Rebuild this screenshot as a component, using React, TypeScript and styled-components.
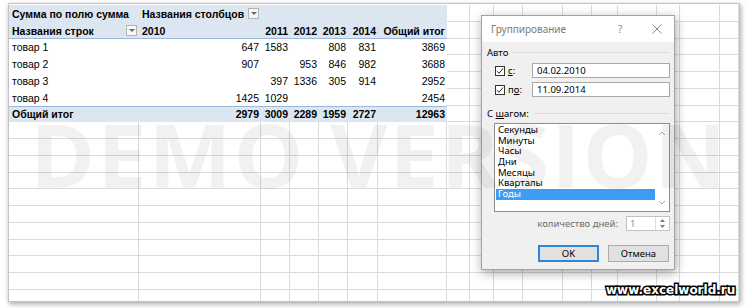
import React from "react";
import styled, { createGlobalStyle } from "styled-components";

const PIVOT_COLS = [130, 122, 29, 29, 29, 30, 69];
const REST_COLS = [23, 24, 29, 40, 29, 26, 39, 23, 40];
const ROW_H = 16.75;
const SHEET_ROWS = 18;
const TOTAL_COLS = PIVOT_COLS.length + REST_COLS.length + 1;

const GlobalStyle = createGlobalStyle`
  html, body { margin: 0; padding: 0; background: #ffffff; }
  body { width: 748px; height: 308px; overflow: hidden; }
`;

const Page = styled.div`
  position: relative;
  width: 748px;
  height: 308px;
  box-sizing: border-box;
  padding: 3px 0 0 8px;
`;

const Sheet = styled.div`
  position: relative;
  width: 732px;
  height: 299px;
  box-sizing: border-box;
  border: 1px solid #c4c4c4;
  padding-top: 1px;
  background: #ffffff;
  overflow: hidden;
  box-shadow: 1px 2px 5px rgba(0, 0, 0, 0.35);
  font-family: "Liberation Sans", Arial, sans-serif;
`;

const Grid = styled.div`
  display: grid;
  grid-template-columns: ${[...PIVOT_COLS, ...REST_COLS].map((c) => `${c}px`).join(" ")} 1fr;
  grid-auto-rows: ${ROW_H}px;
`;

const Cell = styled.div`
  box-sizing: border-box;
  border-right: 1px solid #dadada;
  border-bottom: 1px solid #dadada;
`;

const Pivot = styled.div`
  grid-column: 1 / ${PIVOT_COLS.length + 1};
  grid-row: 1 / 8;
  display: grid;
  grid-template-columns: ${PIVOT_COLS.map((c) => `${c}px`).join(" ")};
  grid-template-rows: repeat(7, ${ROW_H}px);
  background: #ffffff;
`;

type Tone = "head" | "headLast" | "body" | "total";

const PivotCell = styled.div<{ $bold?: boolean; $right?: boolean; $tone: Tone; $span?: number }>`
  box-sizing: border-box;
  display: flex;
  align-items: center;
  justify-content: ${(p) => (p.$right ? "flex-end" : "space-between")};
  gap: 4px;
  padding: 1px 2px 0 3px;
  font-size: 10.5px;
  font-weight: ${(p) => (p.$bold ? 700 : 400)};
  color: #000000;
  white-space: nowrap;
  grid-column: span ${(p) => p.$span ?? 1};
  background: ${(p) => (p.$tone === "body" ? "#ffffff" : "#dce6f1")};
  box-shadow: ${(p) =>
    p.$tone === "headLast"
      ? "inset 0 -1px 0 #9bb9dc"
      : p.$tone === "total"
      ? "inset 0 1px 0 #9bb9dc"
      : "none"};
`;

const DropButton = styled.span`
  box-sizing: border-box;
  flex: none;
  width: 11px;
  height: 11px;
  border: 1px solid #b4b4b4;
  background: #f7f7f7;
  display: flex;
  align-items: center;
  justify-content: center;
  &::after {
    content: "";
    border-left: 3px solid transparent;
    border-right: 3px solid transparent;
    border-top: 3px solid #6a6a6a;
  }
`;

const Watermark = styled.div`
  position: absolute;
  left: 21px;
  top: 118px;
  font-family: "Open Sans", "DejaVu Sans", sans-serif;
  font-weight: 700;
  font-size: 88px;
  line-height: 64px;
  letter-spacing: 2px;
  color: rgba(0, 0, 0, 0.055);
  white-space: nowrap;
  pointer-events: none;
  z-index: 3;
`;

/* ---------- dialog ---------- */

const Dialog = styled.div`
  position: absolute;
  left: 472px;
  top: 11px;
  width: 194px;
  height: 255px;
  box-sizing: border-box;
  border: 1px solid #a3a3a3;
  background: #f0f0f0;
  box-shadow: 1px 3px 10px rgba(0, 0, 0, 0.35);
  display: flex;
  flex-direction: column;
  font-family: "Noto Sans", "Open Sans", sans-serif;
  font-size: 9.5px;
  color: #000000;
  z-index: 2;
`;

const TitleBar = styled.div`
  height: 26px;
  flex: none;
  background: #ffffff;
  display: flex;
  align-items: center;
  padding-left: 9px;
`;

const Title = styled.div`
  flex: 1;
  font-size: 10px;
  color: #7a7a7a;
`;

const HelpMark = styled.div`
  width: 14px;
  margin-right: 19px;
  text-align: center;
  font-size: 10.5px;
  color: #8a8a8a;
`;

const CloseMark = styled.div`
  width: 22px;
  margin-right: 6px;
  display: flex;
  justify-content: center;
  align-items: center;
`;

const Body = styled.div`
  flex: 1;
  display: flex;
  flex-direction: column;
  padding: 0 4px 0 5px;
`;

const GroupHeader = styled.div<{ $mt: number; $gap: number }>`
  display: flex;
  align-items: center;
  gap: ${(p) => p.$gap}px;
  height: 10px;
  margin-top: ${(p) => p.$mt}px;
  &::after {
    content: "";
    flex: 1;
    height: 1px;
    background: #dcdcdc;
  }
`;

const CheckRow = styled.div<{ $mt: number }>`
  display: flex;
  align-items: center;
  height: 15px;
  margin-top: ${(p) => p.$mt}px;
  padding-left: 8px;
`;

const CheckBox = styled.span`
  box-sizing: border-box;
  width: 10px;
  height: 10px;
  border: 1px solid #333333;
  background: #ffffff;
  display: flex;
  align-items: center;
  justify-content: center;
`;

const CheckLabel = styled.span`
  width: 24px;
  margin-left: 3px;
`;

const TextBox = styled.div`
  flex: 1;
  box-sizing: border-box;
  height: 15px;
  border: 1px solid #a8a8a8;
  background: #ffffff;
  padding-left: 4px;
  display: flex;
  align-items: center;
`;

const ListBox = styled.div`
  margin: 5px 0 0 7px;
  height: 89px;
  box-sizing: border-box;
  border: 1px solid #8a8f96;
  background: #ffffff;
  display: flex;
`;

const ListItems = styled.div`
  flex: 1;
  padding: 1px 0 0 1px;
`;

const ListItem = styled.div<{ $selected?: boolean }>`
  height: 10.67px;
  line-height: 10.67px;
  padding-left: 2px;
  background: ${(p) => (p.$selected ? "#3d9df3" : "transparent")};
  color: ${(p) => (p.$selected ? "#ffffff" : "#000000")};
`;

const ScrollCol = styled.div`
  width: 14px;
  display: flex;
  flex-direction: column;
  justify-content: space-between;
  align-items: center;
  padding: 7px 0 6px;
`;

const SpinRow = styled.div`
  display: flex;
  justify-content: flex-end;
  align-items: center;
  height: 15px;
  margin-top: 4px;
`;

const SpinLabel = styled.span`
  color: #6d6d6d;
  margin-right: 8px;
`;

const SpinBox = styled.div`
  width: 44px;
  height: 15px;
  box-sizing: border-box;
  border: 1px solid #c2c2c2;
  background: #ffffff;
  display: flex;
  color: #8c8c8c;
`;

const SpinValue = styled.span`
  flex: 1;
  padding-left: 3px;
  display: flex;
  align-items: center;
`;

const SpinArrows = styled.span`
  width: 13px;
  border-left: 1px solid #dedede;
  display: flex;
  flex-direction: column;
  align-items: center;
  justify-content: center;
  gap: 3px;
`;

const ButtonRow = styled.div`
  display: flex;
  justify-content: flex-end;
  gap: 9px;
  margin-top: 14px;
  padding-right: 1px;
`;

const Button = styled.div<{ $primary?: boolean }>`
  width: 61px;
  height: 17px;
  box-sizing: border-box;
  border: ${(p) => (p.$primary ? "2px solid #2f86d8" : "1px solid #adadad")};
  background: #e1e1e1;
  display: flex;
  align-items: center;
  justify-content: center;
  font-size: 9.5px;
`;

const SiteMark = styled.div`
  position: absolute;
  left: 606px;
  top: 283px;
  font-family: "DejaVu Sans", sans-serif;
  font-weight: 700;
  font-size: 12px;
  color: #ffffff;
  -webkit-text-stroke: 3px #000000;
  paint-order: stroke fill;
  z-index: 5;
`;

const Check = () => (
  <svg width="8" height="8" viewBox="0 0 8 8">
    <polyline points="1,4.2 3,6.3 7,1.5" fill="none" stroke="#222" strokeWidth="1" />
  </svg>
);

const Chevron = ({ up }: { up?: boolean }) => (
  <svg width="8" height="5" viewBox="0 0 8 5">
    <polyline
      points={up ? "1,4 4,1 7,4" : "1,1 4,4 7,1"}
      fill="none"
      stroke="#a6a6a6"
      strokeWidth="1"
    />
  </svg>
);

const Tri = ({ up }: { up?: boolean }) => (
  <svg width="5" height="3" viewBox="0 0 5 3">
    <polygon points={up ? "0,3 2.5,0 5,3" : "0,0 5,0 2.5,3"} fill="#7a7a7a" />
  </svg>
);

const dataRows: string[][] = [
  ["товар 1", "647", "1583", "", "808", "831", "3869"],
  ["товар 2", "907", "", "953", "846", "982", "3688"],
  ["товар 3", "", "397", "1336", "305", "914", "2952"],
  ["товар 4", "1425", "1029", "", "", "", "2454"],
];
const totalRow = ["Общий итог", "2979", "3009", "2289", "1959", "2727", "12963"];
const years = ["2011", "2012", "2013", "2014"];
const steps = ["Секунды", "Минуты", "Часы", "Дни", "Месяцы", "Кварталы", "Годы"];

export default function App() {
  const blankCells: React.ReactNode[] = [];
  for (let r = 1; r <= SHEET_ROWS; r++) {
    const startCol = r <= 7 ? PIVOT_COLS.length + 1 : 1;
    for (let c = startCol; c <= TOTAL_COLS; c++) {
      blankCells.push(
        <Cell key={`${r}-${c}`} style={{ gridRow: r, gridColumn: c }} />
      );
    }
  }

  return (
    <>
      <GlobalStyle />
      <Page>
        <Sheet>
          <Grid>
            <Pivot>
              <PivotCell $tone="head" $bold>Сумма по полю сумма</PivotCell>
              <PivotCell $tone="head" $bold>
                Названия столбцов <DropButton />
              </PivotCell>
              <PivotCell $tone="head" $span={5} />

              <PivotCell $tone="headLast" $bold>
                Названия строк <DropButton />
              </PivotCell>
              <PivotCell $tone="headLast" $bold>2010</PivotCell>
              {years.map((y) => (
                <PivotCell key={y} $tone="headLast" $bold $right>{y}</PivotCell>
              ))}
              <PivotCell $tone="headLast" $bold $right>Общий итог</PivotCell>

              {dataRows.map((row) =>
                row.map((v, i) => (
                  <PivotCell key={`${row[0]}-${i}`} $tone="body" $right={i > 0}>
                    {v}
                  </PivotCell>
                ))
              )}

              {totalRow.map((v, i) => (
                <PivotCell key={`t-${i}`} $tone="total" $bold $right={i > 0}>
                  {v}
                </PivotCell>
              ))}
            </Pivot>
            {blankCells}
          </Grid>

          <Dialog>
            <TitleBar>
              <Title>Группирование</Title>
              <HelpMark>?</HelpMark>
              <CloseMark>
                <svg width="10" height="10" viewBox="0 0 10 10">
                  <path d="M0.5 0.5 L9.5 9.5 M9.5 0.5 L0.5 9.5" stroke="#8a8a8a" strokeWidth="1" />
                </svg>
              </CloseMark>
            </TitleBar>
            <Body>
              <GroupHeader $mt={5} $gap={5}>Авто</GroupHeader>
              <CheckRow $mt={6}>
                <CheckBox><Check /></CheckBox>
                <CheckLabel><u>с</u>:</CheckLabel>
                <TextBox>04.02.2010</TextBox>
              </CheckRow>
              <CheckRow $mt={4}>
                <CheckBox><Check /></CheckBox>
                <CheckLabel>п<u>о</u>:</CheckLabel>
                <TextBox>11.09.2014</TextBox>
              </CheckRow>
              <GroupHeader $mt={11} $gap={6}>
                <span>С <u>ш</u>агом:</span>
              </GroupHeader>
              <ListBox>
                <ListItems>
                  {steps.map((s) => (
                    <ListItem key={s} $selected={s === "Годы"}>{s}</ListItem>
                  ))}
                </ListItems>
                <ScrollCol>
                  <Chevron up />
                  <Chevron />
                </ScrollCol>
              </ListBox>
              <SpinRow>
                <SpinLabel>количество дней:</SpinLabel>
                <SpinBox>
                  <SpinValue>1</SpinValue>
                  <SpinArrows>
                    <Tri up />
                    <Tri />
                  </SpinArrows>
                </SpinBox>
              </SpinRow>
              <ButtonRow>
                <Button $primary>OK</Button>
                <Button>Отмена</Button>
              </ButtonRow>
            </Body>
          </Dialog>

          <Watermark>DEMO VERSION</Watermark>
        </Sheet>
        <SiteMark>www.excelworld.ru</SiteMark>
      </Page>
    </>
  );
}
